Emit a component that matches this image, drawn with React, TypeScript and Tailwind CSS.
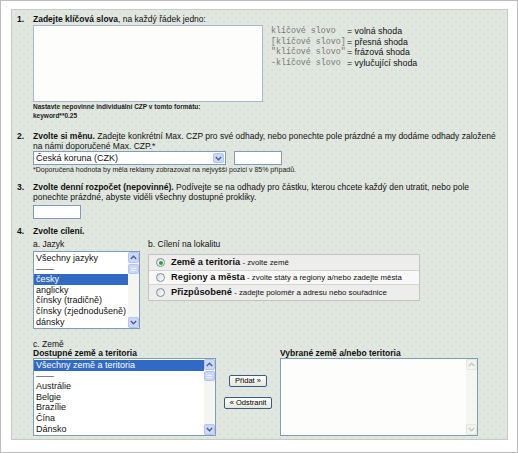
import React from 'react';

const languages = [
  'Všechny jazyky',
  '——',
  'česky',
  'anglicky',
  'čínsky (tradičně)',
  'čínsky (zjednodušeně)',
  'dánsky',
];

const countries = ['Všechny země a teritoria', '——', 'Austrálie', 'Belgie', 'Brazílie', 'Čína', 'Dánsko'];

const matchTypes: [string, string][] = [
  ['klíčové slovo  ', 'volná shoda'],
  ['[klíčové slovo]', 'přesná shoda'],
  ['"klíčové slovo"', 'frázová shoda'],
  ['-klíčové slovo ', 'vylučující shoda'],
];

const locationOptions = [
  { title: 'Země a teritoria', hint: 'zvolte země', checked: true },
  { title: 'Regiony a města', hint: 'zvolte státy a regiony a/nebo zadejte města', checked: false },
  { title: 'Přizpůsobené', hint: 'zadejte poloměr a adresu nebo souřadnice', checked: false },
];

function Arrow({ up, disabled }: { up?: boolean; disabled?: boolean }) {
  return (
    <div
      className={
        disabled
          ? 'flex h-[11px] items-center justify-center rounded-[2px] border border-[#e6e6e0] bg-[#f4f4ef]'
          : 'flex h-[11px] items-center justify-center rounded-[2px] border border-[#b3c5ef] bg-[#c9d8fc]'
      }
    >
      <svg width="7" height="5" viewBox="0 0 7 5">
        <path
          d={up ? 'M0.8 4 L3.5 1.2 L6.2 4' : 'M0.8 1 L3.5 3.8 L6.2 1'}
          fill="none"
          stroke={disabled ? '#c9c9c2' : '#4d6185'}
          strokeWidth="1.4"
        />
      </svg>
    </div>
  );
}

function ScrollBar({ disabled }: { disabled?: boolean }) {
  return (
    <div className="flex w-[11px] flex-col bg-[#f5f5f1]">
      <Arrow up disabled={disabled} />
      {!disabled && (
        <div className="mt-[1px] flex h-[10px] flex-col items-center justify-center gap-[1px] rounded-[2px] border border-[#b3c5ef] bg-[#c9d8fc]">
          <div className="h-[1px] w-[5px] bg-[#eef3ff]" />
          <div className="h-[1px] w-[5px] bg-[#eef3ff]" />
        </div>
      )}
      <div className="flex-1" />
      <Arrow disabled={disabled} />
    </div>
  );
}

function ListBox({ items, selected, width }: { items: string[]; selected: number; width: string }) {
  return (
    <div className={`flex h-[78px] border border-[#7f9db9] bg-white ${width}`}>
      <div className="flex-1 overflow-hidden whitespace-nowrap pt-[1px] text-[9px] leading-[10.6px]">
        {items.map((item, i) => (
          <div key={item} className={i === selected ? 'bg-[#316ac5] pl-[2px] text-white' : 'pl-[2px] text-[#111]'}>
            {item}
          </div>
        ))}
      </div>
      <ScrollBar />
    </div>
  );
}

function Radio({ checked }: { checked: boolean }) {
  return (
    <span className="flex h-[9px] w-[9px] shrink-0 items-center justify-center rounded-full border border-[#7590a9] bg-gradient-to-br from-[#dcdcd6] to-white">
      {checked && <span className="h-[4px] w-[4px] rounded-full bg-[#2aa52a]" />}
    </span>
  );
}

function XpButton({ children }: { children: React.ReactNode }) {
  return (
    <button className="h-[12px] whitespace-nowrap rounded-[2px] border border-[#3c5a87] bg-gradient-to-b from-white to-[#e6e6dc] px-[5px] text-[7.5px] leading-[10px] text-black">
      {children}
    </button>
  );
}

export default function App() {
  return (
    <div className="h-[453px] w-[518px] overflow-hidden border border-[#bcbcbc] bg-white pl-[10px] pt-[8px] font-['Liberation_Sans',Arial,sans-serif] text-[8.5px] leading-[10px] text-[#111]">
      <div className="h-[431px] w-[497px] overflow-hidden whitespace-nowrap border border-[#c6ccc5] bg-[#e1e6e0] bg-[radial-gradient(circle,#b4e0a6_0.5px,transparent_0.8px),radial-gradient(circle,#b4e0a6_0.5px,transparent_0.8px)] bg-[length:8px_8px] bg-[position:0_0,4px_4px] pl-[5px] pt-[4px]">
        {/* 1. keywords */}
        <div className="flex">
          <div className="w-[16px] shrink-0 font-bold">1.</div>
          <div>
            <div>
              <b>Zadejte klíčová slova</b>, na každý řádek jedno:
            </div>
            <div className="mt-[1px] flex">
              <div className="h-[77px] w-[230px] border border-[#a8b8d0] bg-[#fdfdfb]" />
              <div className="ml-[8px] pt-[1px] text-[8.8px] leading-[10.5px]">
                {matchTypes.map(([k, v]) => (
                  <div key={k} className="flex">
                    <span className="w-[76px] whitespace-pre font-['Liberation_Mono',monospace] text-[8.3px] text-[#777]">{k}</span>
                    <span>= {v}</span>
                  </div>
                ))}
              </div>
            </div>
            <div className="text-[6.5px] font-bold leading-[9px] text-[#222]">
              Nastavte nepovinné individuální CZP v tomto formátu:
              <br />
              keyword**0.25
            </div>
          </div>
        </div>

        {/* 2. currency */}
        <div className="mt-[11px] flex">
          <div className="w-[16px] shrink-0 font-bold">2.</div>
          <div>
            <div>
              <b>Zvolte si měnu.</b> Zadejte konkrétní Max. CZP pro své odhady, nebo ponechte pole prázdné a my dodáme odhady založené
              <br />
              na námi doporučené Max. CZP.*
            </div>
            <div className="flex gap-[8px]">
              <div className="flex h-[14px] w-[193px] items-center border border-[#7f9db9] bg-white">
                <span className="flex-1 pl-[2px] text-[9px]">Česká koruna (CZK)</span>
                <div className="m-[1px] flex h-[10px] w-[11px] items-center justify-center rounded-[2px] border border-[#b3c5ef] bg-[#c9d8fc]">
                  <svg width="7" height="5" viewBox="0 0 7 5">
                    <path d="M0.8 1 L3.5 3.8 L6.2 1" fill="none" stroke="#4d6185" strokeWidth="1.4" />
                  </svg>
                </div>
              </div>
              <div className="h-[14px] w-[48px] border border-[#7f9db9] bg-white" />
            </div>
            <div className="text-[7px] leading-[9px] text-[#222]">
              *Doporučená hodnota by měla reklamy zobrazovat na nejvyšší pozici v 85% případů.
            </div>
          </div>
        </div>

        {/* 3. budget */}
        <div className="mt-[8px] flex">
          <div className="w-[16px] shrink-0 font-bold">3.</div>
          <div>
            <div>
              <b>Zvolte denní rozpočet (nepovinné).</b> Podívejte se na odhady pro částku, kterou chcete každý den utratit, nebo pole
              <br />
              ponechte prázdné, abyste viděli všechny dostupné prokliky.
            </div>
            <div className="mt-[3px] h-[14px] w-[48px] border border-[#7f9db9] bg-white" />
          </div>
        </div>

        {/* 4. targeting */}
        <div className="mt-[7px] flex">
          <div className="w-[16px] shrink-0 font-bold">4.</div>
          <div>
            <div className="font-bold">Zvolte cílení.</div>
            <div className="mt-[3px] flex gap-[8px]">
              <div>
                <div>a. Jazyk</div>
                <div className="mt-[2px]">
                  <ListBox items={languages} selected={2} width="w-[107px]" />
                </div>
              </div>
              <div>
                <div>b. Cílení na lokalitu</div>
                <div className="mt-[5px] w-[272px] border border-[#c4c4c4] text-[7.8px]">
                  {locationOptions.map((o, i) => (
                    <div
                      key={o.title}
                      className={
                        i === 1
                          ? 'flex h-[15px] items-center gap-[6px] border-y border-[#d4d4d4] bg-[#f8f8f6] pl-[7px]'
                          : 'flex h-[15px] items-center gap-[6px] bg-[#ededeb] pl-[7px]'
                      }
                    >
                      <Radio checked={o.checked} />
                      <span>
                        <b className="text-[9.3px]">{o.title}</b> - {o.hint}
                      </span>
                    </div>
                  ))}
                </div>
              </div>
            </div>

            <div className="mt-[10px]">c. Země</div>
            <div className="flex">
              <div>
                <div className="font-bold leading-[9px]">Dostupné země a teritoria</div>
                <ListBox items={countries} selected={0} width="w-[183px]" />
              </div>
              <div className="flex w-[64px] flex-col items-center pt-[26px]">
                <XpButton>Přidat »</XpButton>
                <div className="mt-[10px]">
                  <XpButton>« Odstranit</XpButton>
                </div>
              </div>
              <div>
                <div className="font-bold leading-[9px]">Vybrané země a/nebo teritoria</div>
                <div className="flex h-[78px] w-[198px] border border-[#7f9db9] bg-[#fdfdfb]">
                  <div className="flex-1" />
                  <ScrollBar disabled />
                </div>
              </div>
            </div>
          </div>
        </div>
      </div>
    </div>
  );
}
